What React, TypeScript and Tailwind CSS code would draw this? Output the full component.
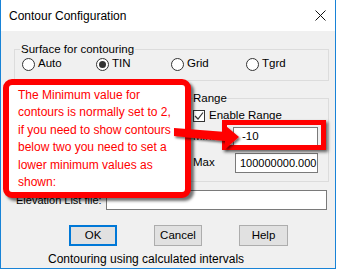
import React from "react";

function Radio({ label, checked, className = "" }: { label: string; checked?: boolean; className?: string }) {
  return (
    <div className={`flex items-center h-[16px] ${className}`}>
      <div className="w-[13px] h-[13px] rounded-full border border-[#333] bg-white flex items-center justify-center">
        {checked && <div className="w-[7px] h-[7px] rounded-full bg-[#333]" />}
      </div>
      <span className="ml-[3px]">{label}</span>
    </div>
  );
}

export default function App() {
  return (
    <div className="w-[337px] h-[269px] bg-white overflow-hidden" style={{ fontFamily: '"Liberation Sans", Arial, sans-serif' }}>
      <div className="relative w-[336px] h-[269px] border-l border-r border-b border-[#1883d7] flex flex-col text-[11.5px] text-black whitespace-nowrap">
        {/* title bar */}
        <div className="h-[31px] bg-white flex items-center justify-between pl-[8px] pr-[9px] shrink-0">
          <span className="text-[12px]">Contour Configuration</span>
          <svg width="11" height="11" viewBox="0 0 11 11">
            <path d="M0.5 0.5 L10.5 10.5 M10.5 0.5 L0.5 10.5" stroke="#111" strokeWidth="1" />
          </svg>
        </div>
        {/* body */}
        <div className="flex-1 bg-[#f0f0f0] flex flex-col">
          <fieldset className="mt-[11px] ml-[13px] w-[315px] border border-[#dcdcdc] pl-[5px] pb-[8px]">
            <legend className="px-[1px] leading-[14px]">Surface for contouring</legend>
            <div className="flex items-center h-[16px] ml-[2px]">
              <Radio label="Auto" className="w-[74px]" />
              <Radio label="TIN" checked className="w-[75px]" />
              <Radio label="Grid" className="w-[75px]" />
              <Radio label="Tgrd" />
            </div>
          </fieldset>
          <div className="flex mt-[17px] ml-[13px]">
            <div className="w-[165px] h-[84px] border border-[#dcdcdc]" />
            <fieldset className="-mt-[7px] ml-[7px] w-[143px] border border-[#dcdcdc] pl-[6px] pb-[8px]">
              <legend className="leading-[14px]">Range</legend>
              <div className="mt-[3px] flex items-center h-[16px]">
                <div className="w-[12px] h-[12px] border border-[#333] bg-white flex items-center justify-center">
                  <svg width="10" height="10" viewBox="0 0 10 10">
                    <path d="M1 5 L4 8 L9 1.5" stroke="#333" strokeWidth="1.2" fill="none" />
                  </svg>
                </div>
                <span className="ml-[4px]">Enable Range</span>
              </div>
              <div className="mt-[3px] flex items-center h-[20px]">
                <span className="w-[40px]">Min:</span>
                <div className="w-[85px] h-[20px] bg-white border border-[#7a7a7a] flex items-center pl-[8px]">-10</div>
              </div>
              <div className="mt-[6px] flex items-center h-[20px]">
                <span className="w-[42px]">Max</span>
                <div className="w-[83px] h-[20px] bg-white border border-[#7a7a7a] flex items-center pl-[4px] text-[11px]">100000000.000</div>
              </div>
            </fieldset>
          </div>
          <div className="mt-[8px] ml-[15px] flex items-center">
            <span className="w-[90px] text-[11px]">Elevation List file:</span>
            <div className="w-[221px] h-[20px] bg-white border border-[#7a7a7a]" />
          </div>
          <div className="mt-[15px] ml-[68px] flex">
            <div className="w-[48px] h-[21px] bg-[#e1e1e1] border-2 border-[#0078d7] flex items-center justify-center">OK</div>
            <div className="ml-[37px] w-[48px] h-[21px] bg-[#e1e1e1] border border-[#adadad] flex items-center justify-center">Cancel</div>
            <div className="ml-[37px] w-[49px] h-[21px] bg-[#e1e1e1] border border-[#adadad] flex items-center justify-center">Help</div>
          </div>
          <div className="mt-[5px] ml-[47px] leading-[16px] text-[12px]">Contouring using calculated intervals</div>
        </div>

        {/* callout overlay */}
        <div className="absolute left-[2px] top-[79px] w-[188px] h-[119px] bg-white border-[6px] border-[#ff0000] rounded-[9px] shadow-[3px_3px_3px_rgba(0,0,0,0.55)] pl-[9px] pt-[2px] text-[#ff0000] text-[12px] leading-[17.4px]">
          The Minimum value for<br />
          contours is normally set to 2,<br />
          if you need to show contours<br />
          below two you need to set a<br />
          lower minimum values as<br />
          shown:
        </div>
        {/* highlight box */}
        <div className="absolute left-[221px] top-[120px] w-[104px] h-[30px] border-[5px] border-[#ff0000] shadow-[2px_2px_3px_rgba(0,0,0,0.6)]" />
        {/* arrow */}
        <svg className="absolute left-[170px] top-[122px]" width="72" height="32" viewBox="0 0 72 32">
          <defs>
            <filter id="sh" x="-20%" y="-20%" width="140%" height="160%">
              <feDropShadow dx="1.5" dy="2" stdDeviation="1.2" floodColor="#000" floodOpacity="0.55" />
            </filter>
          </defs>
          <polygon points="3,6 55,10 55,4 68,15 54,27 54,19 3,14" fill="#ff0000" filter="url(#sh)" />
        </svg>
      </div>
    </div>
  );
}
